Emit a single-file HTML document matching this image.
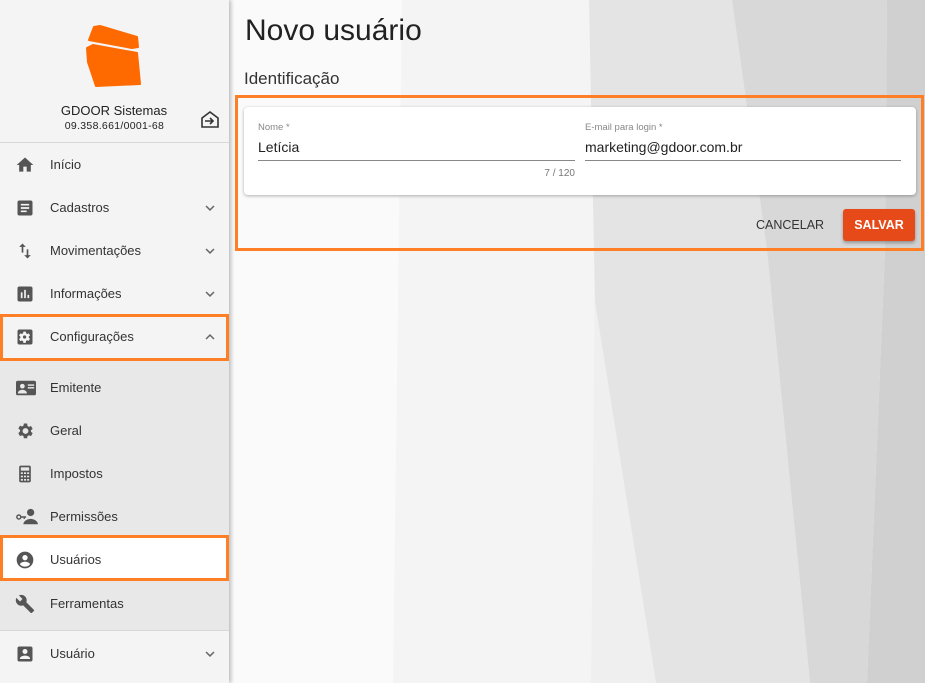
<!DOCTYPE html>
<html><head><meta charset="utf-8"><style>
*{margin:0;padding:0;box-sizing:border-box}
body{width:925px;height:683px;overflow:hidden;font-family:"Liberation Sans",sans-serif;background:#fafafa;position:relative;color:#222}
.bg{position:absolute;left:0;top:0}
.side{position:absolute;left:0;top:0;width:229px;height:683px;background:#f4f4f4;box-shadow:2px 0 4px rgba(0,0,0,.25)}
.item{position:absolute;left:0;width:229px;height:43px;display:flex;align-items:center;font-size:13px;color:#333}
.item svg{position:absolute;left:15px;top:50%;transform:translateY(-50%)}
.item span{position:absolute;left:50px}
.chev{position:absolute}
.hl{position:absolute;border:3px solid #ff7f27}
</style></head><body>
<svg class="bg" width="925" height="683">
<rect x="0" y="0" width="925" height="683" fill="#fafafa"/>
<polygon points="402,0 589,0 595,250 591,683 393,683" fill="#f4f4f4"/>
<polygon points="595,302 656,683 591,683 595,250" fill="#efefef"/>
<polygon points="589,0 732,0 767,250 810,683 656,683 595,302" fill="#e4e4e4"/>
<polygon points="732,0 887,0 885,250 867,683 810,683 767,250" fill="#d8d8d8"/>
<polygon points="887,0 925,0 925,683 867,683 885,250" fill="#d0d0d0"/>
</svg>
<div class="side">
<svg style="position:absolute;left:0;top:0" width="229" height="143">
<polygon points="89,40 94,27 100,26 137,37 138,47 132,48" fill="#ff6a00" stroke="#ff6a00" stroke-width="2" stroke-linejoin="round"/>
<polygon points="87,48 93,45 137,53 140,84 96,86 88,62" fill="#ff6a00" stroke="#ff6a00" stroke-width="2" stroke-linejoin="round"/>
<line x1="0" y1="142.5" x2="229" y2="142.5" stroke="#d8d8d8"/>
<path d="M202 118 L210 112 L218 118 L218 127 L202 127 Z M205 121 H213 M210 118 L213 121 L210 124" fill="none" stroke="#333" stroke-width="1.6"/>
</svg>
<div style="position:absolute;left:0;width:229px;top:103px;text-align:center;font-size:13px;color:#222;padding-right:1px;">GDOOR Sistemas</div>
<div style="position:absolute;left:0;width:229px;top:120px;text-align:center;font-size:10.5px;color:#222;letter-spacing:.3px">09.358.661/0001-68</div>
<div style="position:absolute;left:0;top:360px;width:229px;height:270px;background:#e8e8e8"></div>
<div style="position:absolute;left:0;top:630px;width:229px;height:1px;background:#d8d8d8"></div>

<div class="item" style="top:143px"><svg width="20" height="20" viewBox="0 0 24 24"><path d="M10 20v-6h4v6h5v-8h3L12 3 2 12h3v8z" fill="#555"/></svg><span>Início</span></div>
<div class="item" style="top:186px"><svg width="20" height="20" viewBox="0 0 24 24"><path d="M19 3H5c-1.1 0-2 .9-2 2v14c0 1.1.9 2 2 2h14c1.1 0 2-.9 2-2V5c0-1.1-.9-2-2-2zm-5 14H7v-2h7v2zm3-4H7v-2h10v2zm0-4H7V7h10v2z" fill="#555"/></svg><span>Cadastros</span><svg class="chev" style="left:201px" width="18" height="18" viewBox="0 0 24 24"><path d="M7.4 8.6L12 13.2l4.6-4.6L18 10l-6 6-6-6z" fill="#666"/></svg></div>
<div class="item" style="top:229px"><svg width="20" height="20" viewBox="0 0 24 24"><path d="M16 17.01V10h-2v7.01h-3L15 21l4-3.99h-3zM9 3L5 6.99h3V14h2V6.99h3L9 3z" fill="#555"/></svg><span>Movimentações</span><svg class="chev" style="left:201px" width="18" height="18" viewBox="0 0 24 24"><path d="M7.4 8.6L12 13.2l4.6-4.6L18 10l-6 6-6-6z" fill="#666"/></svg></div>
<div class="item" style="top:272px"><svg width="20" height="20" viewBox="0 0 24 24"><path d="M19 3H5c-1.1 0-2 .9-2 2v14c0 1.1.9 2 2 2h14c1.1 0 2-.9 2-2V5c0-1.1-.9-2-2-2zM9 17H7v-7h2v7zm4 0h-2V7h2v10zm4 0h-2v-4h2v4z" fill="#555"/></svg><span>Informações</span><svg class="chev" style="left:201px" width="18" height="18" viewBox="0 0 24 24"><path d="M7.4 8.6L12 13.2l4.6-4.6L18 10l-6 6-6-6z" fill="#666"/></svg></div>
<div class="item" style="top:315px"><svg width="20" height="20" viewBox="0 0 24 24"><path d="M19 3H5c-1.1 0-2 .9-2 2v14c0 1.1.9 2 2 2h14c1.1 0 2-.9 2-2V5c0-1.1-.9-2-2-2zm-2.5 9c0 .3 0 .5-.1.8l1.6 1.3-1.5 2.6-1.9-.8c-.4.3-.9.6-1.4.8L13 19h-3l-.3-2c-.5-.2-1-.5-1.4-.8l-1.9.8-1.5-2.6 1.6-1.3c0-.3-.1-.5-.1-.8s0-.5.1-.8L4.9 10.2l1.5-2.6 1.9.8c.4-.3.9-.6 1.4-.8L10 5.6h3l.3 2c.5.2 1 .5 1.4.8l1.9-.8 1.5 2.6-1.6 1.3c.1.3.1.5.1.8zM11.5 10a2 2 0 100 4 2 2 0 000-4z" fill="#555"/></svg><span>Configurações</span><svg class="chev" style="left:201px" width="18" height="18" viewBox="0 0 24 24"><path d="M7.4 15.4L12 10.8l4.6 4.6L18 14l-6-6-6 6z" fill="#666"/></svg></div>

<div class="item" style="top:366px"><svg width="22" height="20" viewBox="0 0 24 22"><rect x="1" y="3" width="22" height="16" rx="2" fill="#555"/><circle cx="8" cy="9" r="2.6" fill="#e8e8e8"/><path d="M3 17c0-3 3-4 5-4s5 1 5 4z" fill="#e8e8e8"/><rect x="14" y="7" width="7" height="1.6" fill="#e8e8e8"/><rect x="14" y="10" width="7" height="1.6" fill="#e8e8e8"/></svg><span>Emitente</span></div>
<div class="item" style="top:409px"><svg width="20" height="20" viewBox="0 0 24 24"><path d="M19.1 12.9c.1-.3.1-.6.1-.9s0-.6-.1-.9l2.1-1.6-2-3.5-2.5 1c-.5-.4-1.1-.7-1.7-1L14.6 3h-4l-.4 2.6c-.6.3-1.2.6-1.7 1L6 5.6l-2 3.5 2.1 1.6c0 .3-.1.6-.1.9s0 .6.1.9L4 14.6l2 3.5 2.5-1c.5.4 1.1.7 1.7 1l.4 2.6h4l.4-2.6c.6-.3 1.2-.6 1.7-1l2.5 1 2-3.5zM12.6 15.5a3.5 3.5 0 110-7 3.5 3.5 0 010 7z" fill="#555"/></svg><span>Geral</span></div>
<div class="item" style="top:452px"><svg width="20" height="20" viewBox="0 0 24 24"><rect x="5" y="2" width="14" height="20" rx="2" fill="#555"/><rect x="7" y="4" width="10" height="4" fill="#e8e8e8"/><g fill="#e8e8e8"><rect x="7" y="10" width="2.5" height="2"/><rect x="10.8" y="10" width="2.5" height="2"/><rect x="14.5" y="10" width="2.5" height="2"/><rect x="7" y="14" width="2.5" height="2"/><rect x="10.8" y="14" width="2.5" height="2"/><rect x="14.5" y="14" width="2.5" height="2"/><rect x="7" y="18" width="2.5" height="2"/><rect x="10.8" y="18" width="2.5" height="2"/><rect x="14.5" y="18" width="2.5" height="2"/></g></svg><span>Impostos</span></div>
<div class="item" style="top:495px"><svg width="24" height="20" viewBox="0 0 26 22"><circle cx="17" cy="6" r="4" fill="#555"/><path d="M9 19c0-4 5-6 8-6s8 2 8 6z" fill="#555"/><circle cx="4" cy="11" r="2.2" fill="none" stroke="#555" stroke-width="1.6"/><path d="M6 11h6M10 11v2" stroke="#555" stroke-width="1.6"/></svg><span>Permissões</span></div>
<div style="position:absolute;left:0;top:536px;width:229px;height:44px;background:#fff"></div>
<div class="item" style="top:538px"><svg width="20" height="20" viewBox="0 0 24 24"><path d="M12 2a10 10 0 100 20 10 10 0 000-20zm0 4a3.2 3.2 0 110 6.4A3.2 3.2 0 0112 6zm0 14a7.9 7.9 0 01-6-2.8c0-2 4-3.1 6-3.1s6 1.1 6 3.1A7.9 7.9 0 0112 20z" fill="#555"/></svg><span>Usuários</span></div>
<div class="item" style="top:582px"><svg width="20" height="20" viewBox="0 0 24 24"><path d="M22.7 19l-9.1-9.1c.9-2.3.4-5-1.5-6.9-2-2-5-2.4-7.4-1.3L9 6 6 9 1.6 4.7C.4 7.1.9 10.1 2.9 12.1c1.9 1.9 4.6 2.4 6.9 1.5l9.1 9.1c.4.4 1 .4 1.4 0l2.3-2.3c.5-.4.5-1.1.1-1.4z" fill="#555"/></svg><span>Ferramentas</span></div>
<div class="item" style="top:632px"><svg width="20" height="20" viewBox="0 0 24 24"><path d="M19 3H5c-1.1 0-2 .9-2 2v14c0 1.1.9 2 2 2h14c1.1 0 2-.9 2-2V5c0-1.1-.9-2-2-2zm-7 3a3 3 0 110 6 3 3 0 010-6zm6 12H6v-1c0-2 4-3.1 6-3.1s6 1.1 6 3.1v1z" fill="#555"/></svg><span>Usuário</span><svg class="chev" style="left:201px" width="18" height="18" viewBox="0 0 24 24"><path d="M7.4 8.6L12 13.2l4.6-4.6L18 10l-6 6-6-6z" fill="#666"/></svg></div>
</div>
<div class="hl" style="left:0;top:314px;width:229px;height:47px"></div>
<div class="hl" style="left:0;top:535px;width:229px;height:46px"></div>

<div style="position:absolute;left:245px;top:14px;font-size:30px;color:#222">Novo usuário</div>
<div style="position:absolute;left:244px;top:69px;font-size:17px;color:#333">Identificação</div>
<div class="hl" style="left:235px;top:95px;width:689px;height:156px"></div>
<div style="position:absolute;left:244px;top:107px;width:672px;height:88px;background:#fff;border-radius:4px;box-shadow:0 1px 3px rgba(0,0,0,.3)">
<div style="position:absolute;left:14px;top:15px;font-size:9.5px;color:#888">Nome *</div>
<div style="position:absolute;left:14px;top:32px;font-size:14px;color:#222">Letícia</div>
<div style="position:absolute;left:14px;top:53px;width:317px;height:1px;background:#888"></div>
<div style="position:absolute;left:14px;top:61px;width:317px;text-align:right;font-size:10px;color:#777">7 / 120</div>
<div style="position:absolute;left:341px;top:15px;font-size:9.5px;color:#888">E-mail para login *</div>
<div style="position:absolute;left:341px;top:32px;font-size:14px;color:#222">marketing@gdoor.com.br</div>
<div style="position:absolute;left:341px;top:53px;width:316px;height:1px;background:#888"></div>
</div>
<div style="position:absolute;left:756px;top:218px;font-size:12.5px;color:#333">CANCELAR</div>
<div style="position:absolute;left:843px;top:209px;width:72px;height:32px;background:#e64a19;border-radius:3px;box-shadow:0 2px 3px rgba(0,0,0,.3);color:#fff;font-size:12.5px;font-weight:bold;text-align:center;line-height:32px">SALVAR</div>
</body></html>
